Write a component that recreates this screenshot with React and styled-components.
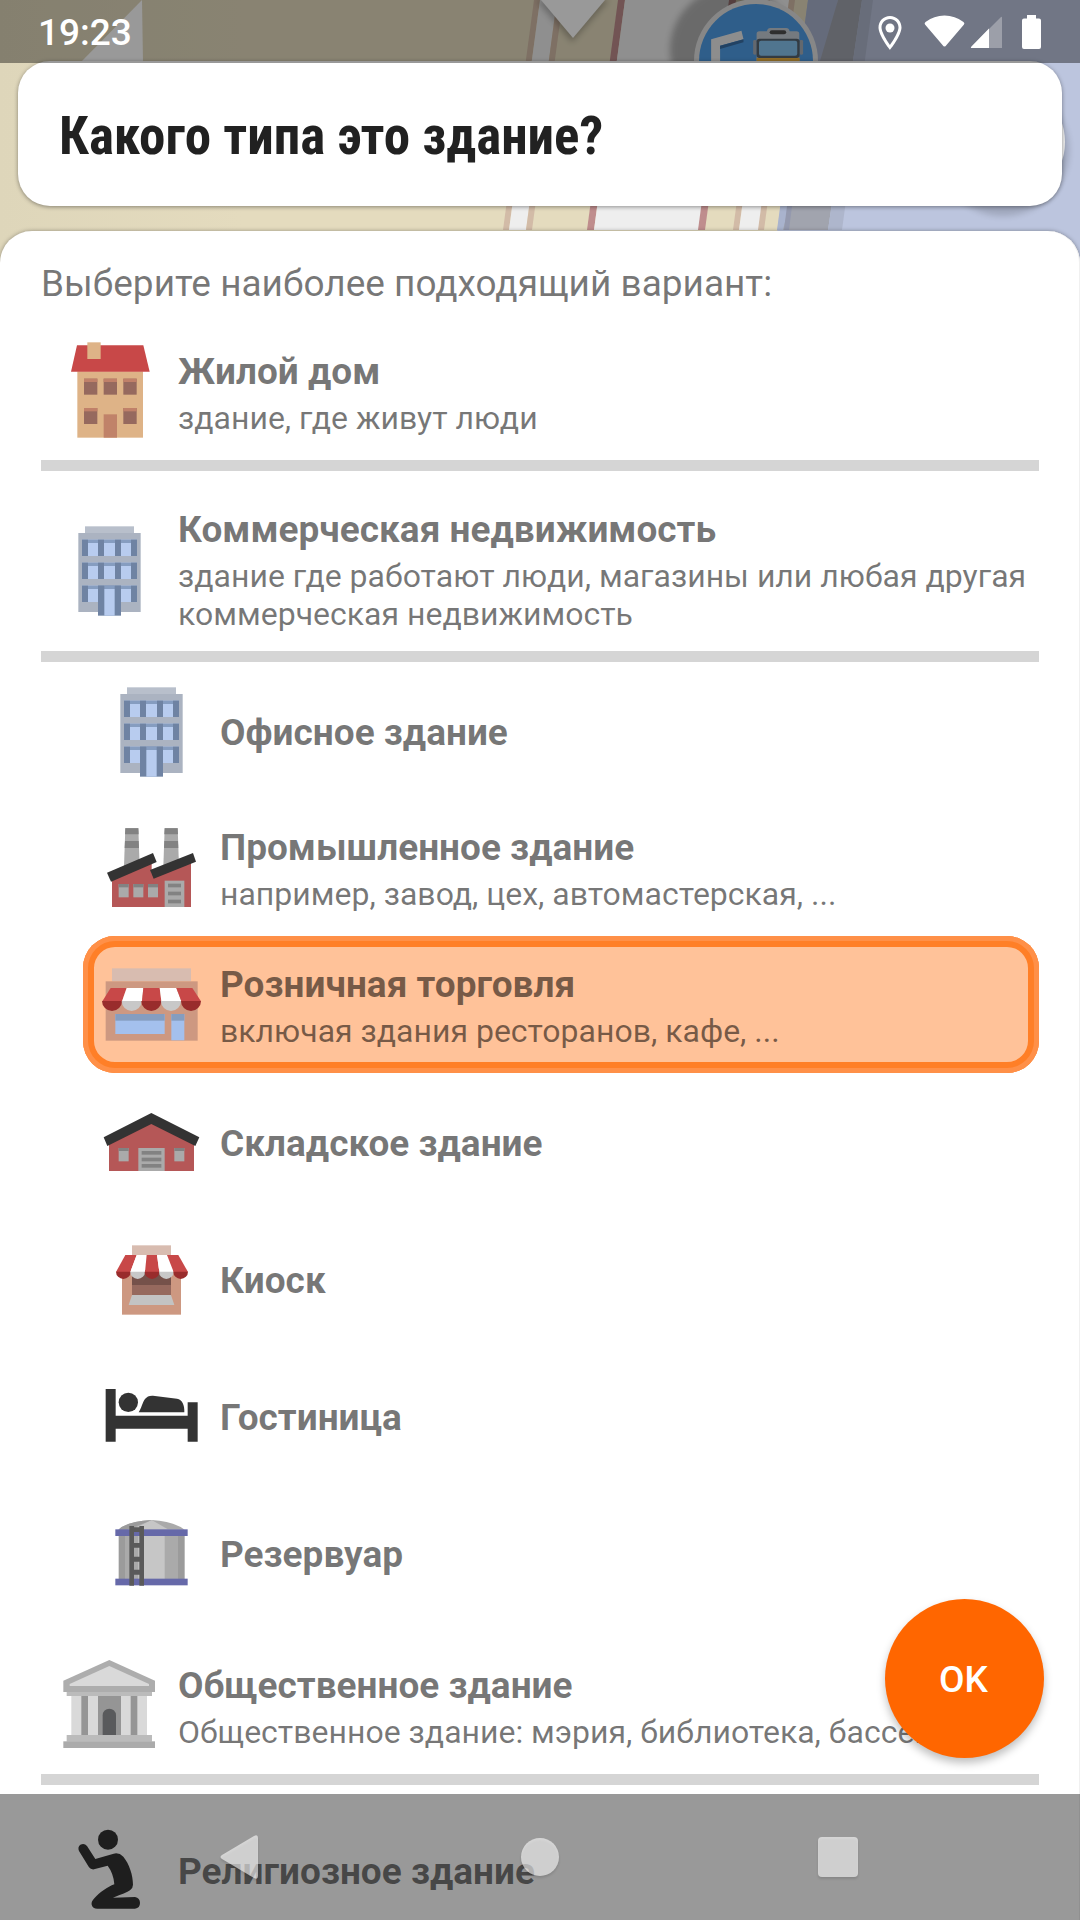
import React, { useState } from "react";
import styled, { createGlobalStyle, css } from "styled-components";

const GlobalStyle = createGlobalStyle`
  * { box-sizing: border-box; }
  html, body { margin: 0; padding: 0; }
  body { font-family: Roboto, "Noto Sans", sans-serif; color: rgba(0, 0, 0, 0.54); }
`;

/* ---------- layout ---------- */

const Screen = styled.div`
  position: relative;
  display: flex;
  flex-direction: column;
  height: 100vh;
  overflow: hidden;
  background: #bcc5de;
`;

const MapLayer = styled.svg`
  position: absolute;
  top: 0;
  left: 0;
  width: 1080px;
  height: 270px;
`;

const StatusBar = styled.header`
  position: absolute;
  z-index: 2;
  top: 0;
  left: 0;
  right: 0;
  display: flex;
  align-items: center;
  justify-content: space-between;
  height: 63px;
  padding: 2px 38px 0;
  background: rgba(0, 0, 0, 0.4);
  color: #fff;
`;

const Clock = styled.time`
  font-size: 37px;
  line-height: 43px;
  font-weight: 500;
`;

const QuestionCard = styled.section`
  position: relative;
  margin: 61px 18px 25px;
  padding: 44px 41px 39px;
  border-radius: 32px;
  background: #fff;
  box-shadow: 0 1px 4px rgba(0, 0, 0, 0.4);
`;

const Question = styled.h1`
  margin: 0;
  font-family: "Roboto Condensed", Roboto, sans-serif;
  font-size: 53px;
  line-height: 62px;
  font-weight: 700;
  color: #212121;
`;

const Sheet = styled.form`
  position: relative;
  flex: 1;
  min-height: 0;
  padding: 31px 41px 0;
  overflow-y: auto;
  scrollbar-width: none;
  border-radius: 32px 32px 0 0;
  background: #fff;
  box-shadow: 0 0 4px rgba(0, 0, 0, 0.35), inset -1px 0 #f0f0f0;
`;

const Hint = styled.p`
  margin: 0 0 2px;
  font-size: 37px;
  line-height: 43px;
`;

const Group = styled.div`
  padding-top: 16px;
  border-bottom: 11px solid #d5d5d5;
`;

const SubList = styled.div`
  padding-left: 42px;
`;

const Option = styled.label`
  position: relative;
  display: flex;
  align-items: center;
  min-height: 137px;
  border-radius: 32px;
  cursor: pointer;
  ${(p) =>
    p.$selected &&
    css`
      background: #ffc299;
      box-shadow: inset 0 0 0 5px #ff9048, inset 0 0 0 11px #ff7f27;
    `}
`;

const Radio = styled.input`
  position: absolute;
  inset: 0;
  width: 100%;
  height: 100%;
  margin: 0;
  opacity: 0;
  cursor: pointer;
`;

const Icon = styled.svg`
  flex: none;
  width: 137px;
  height: 137px;
`;

const Texts = styled.span`
  display: flex;
  flex-direction: column;
  gap: 6px;
  padding: 21px 0 18px;
`;

const Title = styled.span`
  font-size: 37px;
  line-height: 43px;
  font-weight: 700;
`;

const Description = styled.span`
  font-size: 32px;
  line-height: 38px;
`;

const OkButton = styled.button`
  position: absolute;
  z-index: 1;
  right: 36px;
  bottom: 162px;
  width: 159px;
  height: 159px;
  padding: 2px 2px 0 0;
  border: 0;
  border-radius: 50%;
  background: #ff6600;
  color: #fff;
  font: 500 37px/43px Roboto, sans-serif;
  box-shadow: 0 5px 9px rgba(0, 0, 0, 0.25);
  cursor: pointer;
`;

const NavBar = styled.nav`
  position: absolute;
  z-index: 2;
  left: 0;
  right: 0;
  bottom: 0;
  display: flex;
  justify-content: center;
  height: 126px;
  background: rgba(0, 0, 0, 0.4);
`;

const NavButton = styled.button`
  display: flex;
  align-items: center;
  justify-content: center;
  width: 299px;
  padding: 0;
  border: 0;
  background: none;
`;

const NavIcon = styled.svg`
  width: 48px;
  height: 48px;
  fill: #fff;
  fill-opacity: 0.6;
  filter: drop-shadow(0 2px 1px rgba(0, 0, 0, 0.2));
`;

/* ---------- map behind the cards ---------- */

const SLOPE = 31;
const stripes = [
  [534, 6, "#d2bba7"],
  [540, 17, "#eeeeee"],
  [557, 6, "#d2bba7"],
  [618, 7, "#bf8d8d"],
  [625, 105, "#eeeeee"],
  [729, 7, "#bf8d8d"],
  [764, 6, "#d2bba7"],
  [770, 20, "#eeeeee"],
  [789, 6, "#d2bba7"],
];

function MapBackground() {
  return (
    <MapLayer viewBox="0 0 1080 270" aria-hidden="true">
      <defs>
        <linearGradient id="land" x1="0" x2="1">
          <stop offset="0" stopColor="#ded6ba" />
          <stop offset="0.3" stopColor="#e4dbbe" />
          <stop offset="1" stopColor="#e4dbbe" />
        </linearGradient>
        <filter id="soft" x="-20%" y="-20%" width="140%" height="140%">
          <feGaussianBlur stdDeviation="3" />
        </filter>
      </defs>
      <path d="M0 0H808L772 270H0Z" fill="url(#land)" />
      {stripes.map(([x, w, fill]) => (
        <polygon
          key={x}
          fill={fill}
          points={`${x},0 ${x + w},0 ${x + w - SLOPE},230 ${x - SLOPE},230`}
        />
      ))}
      <path d="M808 0H838L790 206L786 230H777Z" fill="#a9b3cd" />
      <path d="M838 0H862L828 230H783L789 206L820 61Z" fill="#a1a4ae" />
      <path d="M787 206H792L789 230H784Z" fill="#9499ae" />
      <path d="M862 0H873L842 230H828Z" fill="#aeb6cc" />
      <path d="M142 0L143 63H80Z" fill="#fff" />
      <circle cx="733" cy="50" r="63" fill="#000" opacity="0.25" filter="url(#soft)" />
      <path d="M536 0L572 42L609 0Z" fill="#000" opacity="0.25" filter="url(#soft)" />
      <path d="M541 0L573 38L605 0Z" fill="#fff" />
      <circle cx="756" cy="61" r="62" fill="#e2e2e2" />
      <circle cx="756" cy="61" r="57" fill="#4f9de6" />
      <g transform="translate(541 0) scale(0.3444 0.3333)">
        <path d="M494 118L582 92L588 118L520 137V190H494Z" fill="#ececec" />
        <path d="M520 137L588 118V127L520 147Z" fill="#3a6fa5" />
        <path d="M626 190V102q0 -8 8 -8h22q2-10 10-10h46q8 0 10 10h20q8 0 8 8V190Z" fill="#c4cbd4" />
        <rect x="664" y="91" width="48" height="12" rx="6" fill="#4e4e4e" />
        <rect x="616" y="120" width="10" height="44" rx="4" fill="#a6aeb8" />
        <rect x="751" y="120" width="10" height="44" rx="4" fill="#a6aeb8" />
        <rect x="626" y="116" width="125" height="58" rx="8" fill="#56636e" />
        <rect x="633" y="122" width="111" height="45" rx="6" fill="#86c4ef" />
        <rect x="626" y="174" width="125" height="16" fill="#f0b542" />
      </g>
      <circle cx="1003" cy="150" r="66" fill="#000" opacity="0.15" filter="url(#soft)" />
      <circle cx="1005" cy="142" r="60" fill="#eeeeee" />
    </MapLayer>
  );
}

function StatusIcons() {
  return (
    <svg width="164" height="36" viewBox="0 0 164 36" fill="#fff" aria-hidden="true">
      <path
        fillRule="evenodd"
        d="M12 1C5.500 1 .5 6 .5 12.500C.5 20.500 12 35 12 35S23.500 20.500 23.500 12.500C23.500 6 18.500 1 12 1ZM12 4C16.800 4 20.500 7.800 20.500 12.500C20.500 18 12 30 12 30S3.500 18 3.500 12.500C3.500 7.800 7.200 4 12 4Z"
      />
      <circle cx="12" cy="13" r="4.500" />
      <path d="M66.500 31.500Q65.500 31.500 64.500 30L47 9.500Q46 8 47.500 7Q56 .5 66.500 .5T85.500 7Q87 8 86 9.500L68.500 30Q67.500 31.500 66.500 31.500Z" />
      <path d="M123 2Q124 1 124 3V33H94Q92 33 93.500 31.500Z" opacity="0.3" />
      <path d="M111 13.500V33H94Q92 33 93.500 31.500Z" />
      <path d="M149 0H158V3.500H161Q163 3.500 163 5.500V32Q163 34 161 34H146Q144 34 144 32V5.500Q144 3.500 146 3.500H149Z" />
    </svg>
  );
}

/* ---------- building icons ---------- */

const Box = ({ x, y, w, h, c }) => <rect x={x} y={y} width={w} height={h} fill={c} />;

function HouseIcon() {
  const windows = [[132, 176], [191, 176], [250, 176], [132, 264], [250, 264]];
  return (
    <Icon viewBox="3 9 411 411">
      <Box x={112} y={154} w={197} h={199} c="#deb387" />
      <path d="M111 76H310L329 155H93Z" fill="#c84848" />
      <Box x={142} y={67} w={40} h={50} c="#deb387" />
      {windows.map(([x, y]) => (
        <g key={`${x}-${y}`}>
          <Box x={x} y={y} w={40} h={48} c="#96695e" />
          <Box x={x} y={y} w={40} h={10} c="#c08069" />
        </g>
      ))}
      <Box x={191} y={283} w={40} h={70} c="#c08269" />
    </Icon>
  );
}

function OfficeIcon() {
  return (
    <Icon viewBox="3 541 411 411">
      <Box x={135} y={617} w={147} h={20} c="#b8bfcb" />
      <Box x={115} y={637} w={187} h={237} c="#abb3c1" />
      {[657, 726, 795].map((y) => (
        <g key={y}>
          <Box x={126} y={y} w={165} h={49} c="#b8ccef" />
          <Box x={126} y={y} w={165} h={10} c="#869dc0" />
          {[126, 174, 225, 273].map((x) => (
            <Box key={x} x={x} y={y} w={18} h={49} c="#6f83a3" />
          ))}
        </g>
      ))}
      <Box x={174} y={795} w={69} h={90} c="#6f83a3" />
      <Box x={193} y={805} w={31} h={80} c="#b8ccef" />
      <Box x={193} y={795} w={31} h={10} c="#869dc0" />
    </Icon>
  );
}

function FactoryIcon() {
  return (
    <Icon viewBox="9 387 411 411">
      {[0, 118].map((dx) => (
        <g key={dx} transform={`translate(${dx} 0)`}>
          <path d="M136 474H175L179 590H132Z" fill="#aaa" />
          <path d="M136 475H175L176 493H135Z" fill="#828282" />
          <path d="M135 513H176L177 534H134Z" fill="#828282" />
        </g>
      ))}
      <path d="M96 625L215 572V610L333 572V711H96Z" fill="#b55757" />
      <path d="M81 608L219 549L230 576L93 635Z" fill="#333" />
      <path d="M210 600L339 549L348 575L221 626Z" fill="#333" />
      {[116, 160, 204].map((x) => (
        <g key={x}>
          <Box x={x} y={642} w={30} h={40} c="#aaa" />
          <Box x={x} y={642} w={30} h={10} c="#828282" />
        </g>
      ))}
      <Box x={254} y={632} w={59} h={79} c="#aaa" />
      {[641, 665, 689].map((y) => (
        <Box key={y} x={264} y={y} w={39} h={11} c="#828282" />
      ))}
    </Icon>
  );
}

function ShopIcon() {
  const awning = [
    ["M122 204H170L156 244H97Z", "#c84848", 126, "#992c2c"],
    ["M170 204H220L216 244H156Z", "#fff", 185, "#c8c8c8"],
    ["M220 204H269L274 244H216Z", "#c84848", 244, "#992c2c"],
    ["M269 204H319L334 244H274Z", "#fff", 303, "#c8c8c8"],
    ["M319 204H367L393 244H334Z", "#c84848", 363, "#992c2c"],
  ];
  return (
    <Icon viewBox="39 48 411 411">
      <Box x={126} y={145} w={237} h={39} c="#d8bcb0" />
      <Box x={107} y={184} w={276} h={178} c="#cd9881" />
      {awning.map(([d, fill, cx, shade]) => (
        <g key={cx}>
          <path d={d} fill={fill} />
          <path d={`M${cx - 30} 243a30 30 0 0 0 60 0Z`} fill={shade} />
        </g>
      ))}
      <Box x={136} y={282} w={148} h={60} c="#a4c0ed" />
      <Box x={136} y={282} w={148} h={20} c="#859dbf" />
      <Box x={304} y={282} w={39} h={79} c="#a4c0ed" />
      <Box x={304} y={282} w={39} h={20} c="#859dbf" />
    </Icon>
  );
}

function WarehouseIcon() {
  return (
    <Icon viewBox="39 459 411 411">
      <path d="M117 665L244 603L372 665V753H117Z" fill="#b55757" />
      <path d="M244 579L388 652L376 678L244 612L112 678L101 652Z" fill="#333" />
      {[146, 313].map((x) => (
        <g key={x}>
          <Box x={x} y={684} w={30} h={40} c="#aaa" />
          <Box x={x} y={684} w={30} h={9} c="#828282" />
        </g>
      ))}
      <Box x={205} y={684} w={79} h={69} c="#aaa" />
      {[693, 713, 732].map((y) => (
        <Box key={y} x={215} y={y} w={59} h={11} c="#828282" />
      ))}
    </Icon>
  );
}

function KioskIcon() {
  const awning = [
    ["M136 105H170L151 156H108Z", "#c84848", 130, "#992c2c"],
    ["M170 105H200L195 156H151Z", "#fff", 173, "#c8c8c8"],
    ["M200 105H231L238 156H195Z", "#c84848", 216, "#992c2c"],
    ["M231 105H261L281 156H238Z", "#fff", 259, "#c8c8c8"],
    ["M261 105H295L324 156H281Z", "#c84848", 302, "#992c2c"],
  ];
  return (
    <Icon viewBox="9 -30 411 411">
      <Box x={156} y={76} w={117} h={30} c="#d8bcb0" />
      <Box x={126} y={150} w={177} h={134} c="#cd9881" />
      <Box x={156} y={150} w={117} h={46} c="#75514a" />
      <Box x={156} y={195} w={117} h={31} c="#96695e" />
      <path d="M156 225H273L283 255H146Z" fill="#c3c3c3" />
      {awning.map(([d, fill, cx, shade]) => (
        <g key={cx}>
          <path d={d} fill={fill} />
          <path d={`M${cx - 22} 155a22 22 0 0 0 44 0Z`} fill={shade} />
        </g>
      ))}
    </Icon>
  );
}

function BedIcon() {
  return (
    <Icon viewBox="9 381 411 411" fill="#333">
      <path d="M77 507H107V587H323V547H353V665H323V626H107V665H77Z" />
      <circle cx="145" cy="547" r="29" />
      <path d="M176 577C184 565 188 546 195 537Q203 526 219 527L291 536C307 539 314 555 313 577Z" />
    </Icon>
  );
}

function TankIcon() {
  return (
    <Icon viewBox="129 12 411 411">
      <path d="M235 149Q262 124 335 120Q400 124 434 149Z" fill="#aaa" />
      <path d="M274 149L335 120L386 149Z" fill="#c6c6c6" />
      <path d="M235 149Q262 124 335 120L262 149Z" fill="#9b9b9b" />
      <Box x={236} y={160} w={198} h={140} c="#9b9b9b" />
      <Box x={255} y={160} w={159} h={140} c="#aaa" />
      <Box x={295} y={160} w={79} h={140} c="#c6c6c6" />
      <Box x={226} y={148} w={217} h={20} c="#6669a9" />
      <Box x={226} y={296} w={217} h={20} c="#6669a9" />
      <path
        fillRule="evenodd"
        fill="#5a5a5a"
        d="M268 138H282V142H298V138H312V317H298V284H282V317H268ZM282 156V189H298V156ZM282 203V230H298V203ZM282 245V269H298V245Z"
      />
    </Icon>
  );
}

function CivicIcon() {
  return (
    <Icon viewBox="3 471 411 411">
      <Box x={94} y={645} w={227} h={122} c="#d9d9d9" />
      <Box x={124} y={648} w={20} h={118} c="#959595" />
      <Box x={174} y={648} w={69} h={118} c="#959595" />
      <Box x={272} y={648} w={20} h={118} c="#959595" />
      <path d="M188 766V706a20 20 0 0 1 40 0V766Z" fill="#595a5c" />
      <Box x={80} y={634} w={256} h={14} c="#bbb" />
      <path d="M70 602L208 540L345 602V636H70Z" fill="#adadad" />
      <path d="M89 612L208 558L327 612V618H89Z" fill="#d9d9d9" />
      <Box x={80} y={765} w={256} h={20} c="#bbb" />
      <Box x={70} y={784} w={275} h={20} c="#ababab" />
    </Icon>
  );
}

function PrayerIcon() {
  return (
    <Icon viewBox="3 123 411 411" fill="#333">
      <circle cx="204" cy="239" r="30" />
      <path d="M141 258L166 297L221 281Q237 277 250 290C268 312 279 345 279 374Q279 384 270 391Q258 399 219 413L285 411Q300 414 300 429T285 446H172Q158 446 155 434Q153 425 163 415C180 396 202 381 223 373Q221 341 203 317L162 328Q152 329 147 322L117 273Q112 261 121 254Q133 248 141 258Z" />
    </Icon>
  );
}

/* ---------- options ---------- */

function BuildingOption({ id, icon: Glyph, title, description, value, onChange }) {
  return (
    <Option $selected={value === id}>
      <Radio
        type="radio"
        name="building"
        value={id}
        checked={value === id}
        onChange={() => onChange(id)}
      />
      <Glyph />
      <Texts>
        <Title>{title}</Title>
        {description && <Description>{description}</Description>}
      </Texts>
    </Option>
  );
}

const groups = [
  { id: "residential", icon: HouseIcon, title: "Жилой дом", description: "здание, где живут люди" },
  {
    id: "commercial",
    icon: OfficeIcon,
    title: "Коммерческая недвижимость",
    description: "здание где работают люди, магазины или любая другая коммерческая недвижимость",
    items: [
      { id: "office", icon: OfficeIcon, title: "Офисное здание" },
      {
        id: "industrial",
        icon: FactoryIcon,
        title: "Промышленное здание",
        description: "например, завод, цех, автомастерская, ...",
      },
      {
        id: "retail",
        icon: ShopIcon,
        title: "Розничная торговля",
        description: "включая здания ресторанов, кафе, ...",
      },
      { id: "warehouse", icon: WarehouseIcon, title: "Складское здание" },
      { id: "kiosk", icon: KioskIcon, title: "Киоск" },
      { id: "hotel", icon: BedIcon, title: "Гостиница" },
      { id: "tank", icon: TankIcon, title: "Резервуар" },
    ],
  },
  {
    id: "civic",
    icon: CivicIcon,
    title: "Общественное здание",
    description: "Общественное здание: мэрия, библиотека, бассейн, ...",
  },
  { id: "religious", icon: PrayerIcon, title: "Религиозное здание" },
];

export default function App() {
  const [value, setValue] = useState("retail");
  return (
    <Screen>
      <GlobalStyle />
      <MapBackground />
      <StatusBar>
        <Clock>19:23</Clock>
        <StatusIcons />
      </StatusBar>
      <QuestionCard>
        <Question>Какого типа это здание?</Question>
      </QuestionCard>
      <Sheet>
        <Hint>Выберите наиболее подходящий вариант:</Hint>
        {groups.map(({ items, ...group }) => (
          <React.Fragment key={group.id}>
            <Group>
              <BuildingOption {...group} value={value} onChange={setValue} />
            </Group>
            {items && (
              <SubList>
                {items.map((item) => (
                  <BuildingOption key={item.id} {...item} value={value} onChange={setValue} />
                ))}
              </SubList>
            )}
          </React.Fragment>
        ))}
      </Sheet>
      <OkButton type="button">OK</OkButton>
      <NavBar>
        <NavButton type="button" aria-label="Назад">
          <NavIcon viewBox="0 0 48 48">
            <path d="M37 3Q41 1 41 5V43Q41 47 37 45L5 26Q2 24 5 22Z" />
          </NavIcon>
        </NavButton>
        <NavButton type="button" aria-label="Домой">
          <NavIcon viewBox="0 0 48 48">
            <circle cx="24" cy="24" r="19" />
          </NavIcon>
        </NavButton>
        <NavButton type="button" aria-label="Обзор">
          <NavIcon viewBox="0 0 48 48">
            <rect x="3" y="4" width="40" height="40" rx="4" />
          </NavIcon>
        </NavButton>
      </NavBar>
    </Screen>
  );
}
